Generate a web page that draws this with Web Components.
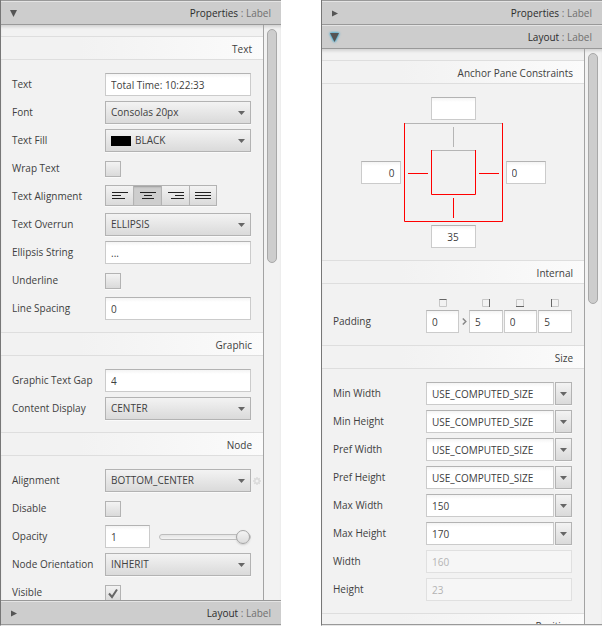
<!DOCTYPE html>
<html lang="en">
<head>
<meta charset="utf-8">
<title>Inspector</title>
<style>
  html, body { height: 100%; }
  body { margin: 0; background: #fff; color: #404040; font: 10px/16px "Open Sans", "Noto Sans", sans-serif; }
</style>
</head>
<body>
<inspector-page></inspector-page>
<script>
const CONTROLS = `
  * { box-sizing: border-box; }
  input, select, button { font: inherit; color: inherit; margin: 0; border-radius: 0; outline: none; }
  input.text { width: 100%; min-width: 0; height: 23px; padding: 0 5px; border: 1px solid #cbcbcb; border-top-color: #b3b3b3;
    background: linear-gradient(#f4f4f4, #fff 4px); }
  input.text:disabled { border-color: #e0e0e0; background: #f6f6f6; color: #b4b4b4; }
  .face { border: 1px solid #b3b3b3; background: linear-gradient(#f3f3f3, #dadada); box-shadow: 0 1px #fafafa; }
  .arrow { width: 7px; height: 4px; fill: #666; display: block; }
`;
const ARROW = '<svg class="arrow" viewBox="0 0 7 4" aria-hidden="true"><path d="M0 0H7L3.5 4Z"/></svg>';

function define(name, render) {
  customElements.define(name, class extends HTMLElement {
    connectedCallback() {
      if (this.shadowRoot) return;
      const root = this.attachShadow({ mode: 'open' });
      const t = document.createElement('template');
      t.innerHTML = render(this);
      root.append(t.content.cloneNode(true));
    }
  });
}
const at = (el, n, d = '') => el.getAttribute(n) ?? d;

/* Collapsible title bar: "Properties : Label" */
define('pane-title', el => {
  const open = el.hasAttribute('open'), focus = el.hasAttribute('focused');
  const shape = focus ? 'M1 1H10L5.5 10Z' : open ? 'M2 2H9L5.5 9Z' : 'M3 2.5L9 5.5L3 8.5Z';
  return `<style>
    :host { display: block; box-sizing: border-box; height: 24px; flex: none; border-top: 1px solid #999; }
    button { all: unset; box-sizing: border-box; display: flex; align-items: center; width: 100%; height: 23px; padding: 0 10px 0 7px;
      background: #cdcdcd; border-top: 1px solid #e4e4e4; cursor: pointer; }
    svg { width: 11px; height: 11px; fill: #555; overflow: visible; }
    svg.glow { filter: drop-shadow(0 0 1px #2aa0cc) drop-shadow(0 0 1px #5bb5d4); }
    .name { margin-left: auto; color: #2c2c2c; white-space: pre; }
    .kind { color: #707070; white-space: pre; }
  </style>
  <button type="button" aria-expanded="${open}"><svg class="${focus ? 'glow' : ''}" viewBox="0 0 11 11" aria-hidden="true"><path d="${shape}"/></svg>
  <span class="name">${at(el, 'name')}</span><span class="kind"> : ${at(el, 'kind')}</span></button>`;
});

/* Scrolling body below an open title bar */
define('pane-body', el => `<style>
    :host { display: flex; flex: 1; min-height: 0; border-top: 1px solid #999; background: #f2f2f2; overflow: hidden;
      box-shadow: inset 0 3px 3px -1px #d2d2d2; }
    .view { flex: 1; min-width: 0; overflow: hidden; padding-top: 11px; border-right: 1px solid #a3a3a3; }
    .bar { width: 17px; flex: none; box-sizing: border-box; padding: 4px 4px 0 3px; }
    .thumb { width: 10px; height: ${at(el, 'extent')}; box-sizing: border-box; border: 1px solid #a8a8a8; border-radius: 5px; background: #cdcdcd; }
  </style>
  <div class="view"><slot></slot></div><div class="bar"><div class="thumb"></div></div>`);

define('inspector-panel', () => `<style>
    :host { display: flex; flex-direction: column; flex: 1; min-width: 0; height: 100%; box-sizing: border-box;
      border-left: 1px solid #777; border-bottom: 1px solid #e6e6e6; overflow: hidden; }
    .end { height: 1px; flex: none; background: #999; }
  </style><slot></slot><div class="end"></div>`);

define('prop-section', el => `<style>
    :host { display: block; }
    h2 { margin: 0; height: 24px; box-sizing: border-box; padding: 0 11px; border: solid #dedede; border-width: 1px 0;
      font: inherit; line-height: 24px; text-align: right; background: linear-gradient(90deg, #f2f2f2 30%, #fbfbfb); }
    .rows { display: flex; flex-direction: column; gap: 5px; padding: 13px 0 12px; }
  </style><h2>${at(el, 'heading')}</h2><div class="rows"><slot></slot></div>`);

/* One labelled property; the "kind" attribute picks the editor */
const EDITORS = {
  text: v => `<input class="text" id="f" type="text" value="${v}">`,
  readonly: v => `<input class="text" id="f" type="text" value="${v}" disabled>`,
  choice: v => `<div class="choice"><select id="f" class="face"><option>${v}</option></select>${ARROW}</div>`,
  color: v => `<div class="choice color"><select id="f" class="face"><option>${v}</option></select><i></i>${ARROW}</div>`,
  check: (v, el) => `<div class="check"><input id="f" type="checkbox" class="face" ${el.hasAttribute('checked') ? 'checked' : ''}>
    <svg viewBox="0 0 16 16" aria-hidden="true"><path d="M4 8.5L7 12L12 4.5" fill="none" stroke="#666" stroke-width="2"/></svg></div>`,
  slider: v => `<div class="slide"><input class="text" id="f" type="text" value="${v}"><input type="range" min="0" max="1" step="0.1" value="${v}" aria-label="Opacity slider"></div>`,
  size: v => `<div class="size"><input class="text" id="f" type="text" value="${v}"><button type="button" class="face" aria-label="Choose a size">${ARROW}</button></div>`,
  align: () => '<div class="align" role="radiogroup" aria-label="Text Alignment">' +
    [['Left', 'M0 .5H16M0 3.5H9M0 6.5H13'], ['Center', 'M0 .5H16M4 3.5H12M2 6.5H14'], ['Right', 'M0 .5H16M7 3.5H16M3 6.5H16'], ['Justify', 'M0 .5H16M0 3.5H16M0 6.5H16']]
      .map(([n, d], i) => `<label><input type="radio" name="a" aria-label="${n}" ${i === 1 ? 'checked' : ''}${i ? '' : ' id="f"'}><svg viewBox="0 0 16 7" aria-hidden="true"><path d="${d}" stroke="#222"/></svg></label>`).join('') + '</div>',
  insets: v => {
    const sides = ['M.5 .5H7.5', 'M7.5 0V8', 'M0 7.5H8', 'M.5 0V8'], names = ['Top', 'Right', 'Bottom', 'Left'];
    const cells = v.split(',').map((n, i) => `<div class="inset"><svg viewBox="0 0 8 8" aria-hidden="true"><path d="M.5 .5H7.5V7.5H.5Z" fill="none" stroke="#c8c8c8"/><path d="${sides[i]}" stroke="#666"/></svg><input class="text" ${i ? '' : 'id="f"'} type="text" value="${n}" aria-label="${names[i]} padding"></div>`);
    cells.splice(1, 0, '<svg class="chev" viewBox="0 0 5 7" aria-hidden="true"><path d="M.8 .5L3.8 3.5L.8 6.5" fill="none" stroke="#888" stroke-width="1.5"/></svg>');
    return `<div class="insets">${cells.join('')}</div>`;
  }
};
define('prop-row', el => `<style>${CONTROLS}
    :host { display: grid; grid-template-columns: 93px minmax(0, 1fr) 12px; align-items: center; min-height: 23px; padding-left: 11px; }
    .name { line-height: 23px; white-space: nowrap; align-self: end; }
    .choice { display: grid; align-items: center; }
    .choice > * { grid-area: 1 / 1; }
    .choice .arrow { justify-self: end; margin-right: 6px; pointer-events: none; }
    .choice i { width: 20px; height: 10px; margin-left: 6px; background: #000; pointer-events: none; }
    select { appearance: none; width: 100%; height: 23px; padding: 0 20px 0 5px; line-height: 21px; }
    .color select { padding-left: 29px; }
    .check { display: grid; width: 16px; height: 16px; }
    .check > * { grid-area: 1 / 1; width: 16px; height: 16px; }
    .check input { appearance: none; }
    .check svg { display: none; pointer-events: none; }
    .check input:checked + svg { display: block; }
    .slide { display: flex; align-items: center; gap: 9px; }
    .slide .text { width: 45px; flex: none; }
    input[type=range] { appearance: none; flex: 1; min-width: 0; height: 14px; background: none; }
    input[type=range]::-webkit-slider-runnable-track { height: 6px; border: 1px solid #bdbdbd; border-radius: 3px; background: linear-gradient(#e4e4e4, #f4f4f4); }
    input[type=range]::-webkit-slider-thumb { appearance: none; width: 14px; height: 14px; margin-top: -5px; border: 1px solid #a5a5a5; border-radius: 50%;
      background: linear-gradient(#f4f4f4, #dcdcdc); box-shadow: 0 1px 2px #ccc; }
    .size { display: flex; gap: 1px; }
    .size .text { flex: 1; }
    .size button { width: 17px; height: 23px; padding: 0; display: grid; place-items: center; }
    .align { display: flex; align-self: start; height: 21px; width: max-content; border: 1px solid #b3b3b3; background: linear-gradient(#f3f3f3, #dadada); box-shadow: 0 1px #fafafa; }
    .align label { display: grid; place-items: center; width: 28px; }
    .align label:first-child, .align label:last-child { width: 27px; }
    .align label + label { border-left: 1px solid #b3b3b3; }
    .align label:has(:checked) { background: #cecece; box-shadow: inset 0 2px 2px -1px #999; }
    .align input { appearance: none; grid-area: 1 / 1; width: 100%; height: 100%; }
    .align svg { grid-area: 1 / 1; width: 16px; height: 7px; pointer-events: none; }
    .insets { display: grid; grid-template-columns: 33px 8px 1fr 1fr 1fr; column-gap: 1px; margin-top: 2px; }
    .inset { display: grid; justify-items: center; gap: 3px; }
    .inset svg { width: 8px; height: 8px; }
    .chev { width: 5px; height: 7px; align-self: end; justify-self: center; margin-bottom: 8px; }
    .gear { all: unset; display: grid; place-items: center; width: 12px; height: 12px; cursor: pointer; }
    .gear svg { width: 8px; height: 8px; }
  </style>
  <label class="name" for="f">${at(el, 'label')}</label>
  ${EDITORS[at(el, 'kind', 'text')](at(el, 'value'), el)}
  ${el.hasAttribute('menu') ? '<button type="button" class="gear" aria-label="Options"><svg viewBox="0 0 8 8"><circle cx="4" cy="4" r="2.2" fill="none" stroke="#dadada" stroke-width="1.4"/><path d="M4 0V1.5M4 6.5V8M0 4H1.5M6.5 4H8M1.2 1.2L2.2 2.2M5.8 5.8L6.8 6.8M6.8 1.2L5.8 2.2M2.2 5.8L1.2 6.8" stroke="#dadada" stroke-width="1.4"/></svg></button>' : ''}`);

/* Four anchor fields around a diagram of the anchored node */
define('anchor-editor', () => `<style>${CONTROLS}
    :host { display: grid; justify-content: center; grid-template: "a t b" 23px "l c r" 99px "d m e" 23px / 40px 99px 40px; gap: 3px; align-items: center; }
    .t { grid-area: t; } .l { grid-area: l; } .r { grid-area: r; } .m { grid-area: m; }
    input.t, input.m { width: 45px; justify-self: center; text-align: center; }
    input.l { text-align: right; }
    svg { grid-area: c; width: 99px; height: 99px; fill: none; }
  </style>
  <input class="text t" type="text" aria-label="Top anchor">
  <input class="text l" type="text" value="0" aria-label="Left anchor">
  <svg viewBox="0 0 99 99" aria-hidden="true"><path stroke="#b5b5b5" d="M0 .5H99M27 27.5H72M49.5 4V24"/>
  <path stroke="#f00" d="M.5 0V98.5H98.5V0M27.5 27V71.5H71.5V27M49.5 75V95M4 50.5H24M75 50.5H95"/></svg>
  <input class="text r" type="text" value="0" aria-label="Right anchor">
  <input class="text m" type="text" value="35" aria-label="Bottom anchor">`);

define('inspector-page', () => `<style>
    :host { display: flex; gap: 40px; height: 100%; }
  </style>
  <inspector-panel>
    <pane-title name="Properties" kind="Label" open></pane-title>
    <pane-body extent="41%">
      <prop-section heading="Text">
        <prop-row label="Text" value="Total Time: 10:22:33"></prop-row>
        <prop-row label="Font" kind="choice" value="Consolas 20px"></prop-row>
        <prop-row label="Text Fill" kind="color" value="BLACK"></prop-row>
        <prop-row label="Wrap Text" kind="check"></prop-row>
        <prop-row label="Text Alignment" kind="align"></prop-row>
        <prop-row label="Text Overrun" kind="choice" value="ELLIPSIS"></prop-row>
        <prop-row label="Ellipsis String" value="..."></prop-row>
        <prop-row label="Underline" kind="check"></prop-row>
        <prop-row label="Line Spacing" value="0"></prop-row>
      </prop-section>
      <prop-section heading="Graphic">
        <prop-row label="Graphic Text Gap" value="4"></prop-row>
        <prop-row label="Content Display" kind="choice" value="CENTER"></prop-row>
      </prop-section>
      <prop-section heading="Node">
        <prop-row label="Alignment" kind="choice" value="BOTTOM_CENTER" menu></prop-row>
        <prop-row label="Disable" kind="check"></prop-row>
        <prop-row label="Opacity" kind="slider" value="1"></prop-row>
        <prop-row label="Node Orientation" kind="choice" value="INHERIT"></prop-row>
        <prop-row label="Visible" kind="check" checked></prop-row>
      </prop-section>
    </pane-body>
    <pane-title name="Layout" kind="Label"></pane-title>
  </inspector-panel>
  <inspector-panel>
    <pane-title name="Properties" kind="Label"></pane-title>
    <pane-title name="Layout" kind="Label" open focused></pane-title>
    <pane-body extent="44%">
      <prop-section heading="Anchor Pane Constraints"><anchor-editor></anchor-editor></prop-section>
      <prop-section heading="Internal">
        <prop-row label="Padding" kind="insets" value="0,5,0,5"></prop-row>
      </prop-section>
      <prop-section heading="Size">
        <prop-row label="Min Width" kind="size" value="USE_COMPUTED_SIZE"></prop-row>
        <prop-row label="Min Height" kind="size" value="USE_COMPUTED_SIZE"></prop-row>
        <prop-row label="Pref Width" kind="size" value="USE_COMPUTED_SIZE"></prop-row>
        <prop-row label="Pref Height" kind="size" value="USE_COMPUTED_SIZE"></prop-row>
        <prop-row label="Max Width" kind="size" value="150"></prop-row>
        <prop-row label="Max Height" kind="size" value="170"></prop-row>
        <prop-row label="Width" kind="readonly" value="160"></prop-row>
        <prop-row label="Height" kind="readonly" value="23"></prop-row>
      </prop-section>
      <prop-section heading="Position"></prop-section>
    </pane-body>
  </inspector-panel>`);
</script>
</body>
</html>
